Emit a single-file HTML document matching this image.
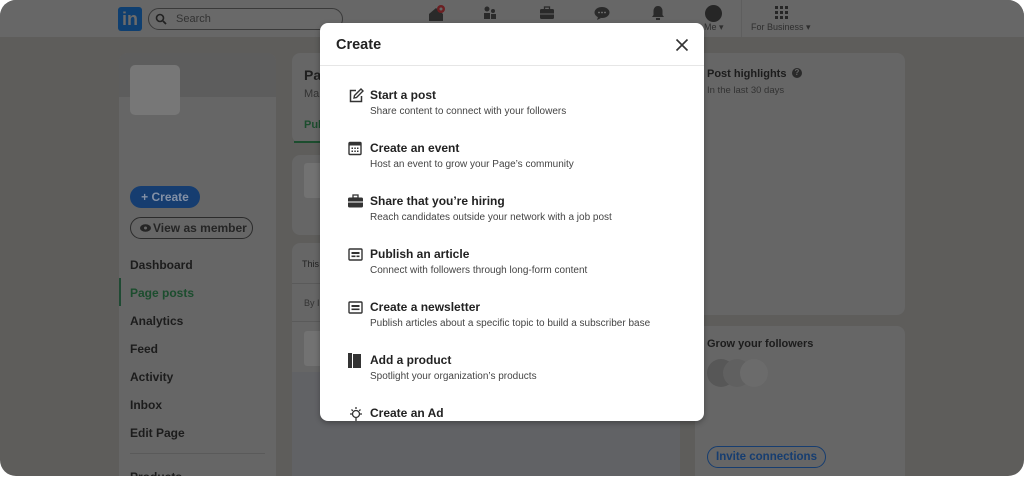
<!DOCTYPE html>
<html><head><meta charset="utf-8"><style>
*{margin:0;padding:0;box-sizing:border-box}
body{width:1024px;height:478px;background:#fff;font-family:"Liberation Sans",Arial,sans-serif;position:relative;overflow:hidden}
.frame{position:absolute;left:0;top:0;width:1024px;height:476px;border-radius:16px;background:#5e5d5b;overflow:hidden}
.a{position:absolute}
.card{position:absolute;background:#666;border-radius:8px}
.t{position:absolute;white-space:nowrap}
.nav{position:absolute;left:0;top:0;width:1024px;height:37px;background:#676767}
.modal{position:absolute;left:320px;top:23px;width:384px;height:398px;background:#fff;border-radius:8px;overflow:hidden;box-shadow:0 2px 6px rgba(0,0,0,.3)}
.it{position:absolute;left:50px}
.it b{display:block;font-size:12px;font-weight:bold;color:#222}
.it span{display:block;font-size:10px;color:#444;margin-top:4px}
.ic{position:absolute;left:28px}
.lm{position:absolute;left:130px;font-size:12px;font-weight:bold;color:#1c1c1c}
</style></head><body>
<div class="frame">
<div class="nav"></div>
<div class="a" style="left:118px;top:7px;width:24px;height:24px;background:#0f3f70;border-radius:3px;color:#777;font-weight:bold;font-size:18px;line-height:25px;text-align:center;color:#6a6a6a">in</div>
<div class="a" style="left:148px;top:8px;width:195px;height:22px;border:1px solid #3a3a3a;border-radius:12px;background:#696969"></div>
<svg class="a" style="left:155px;top:13px" width="12" height="12"><circle cx="5" cy="5" r="3.5" stroke="#222" stroke-width="1.6" fill="none"/><path d="M8 8l3 3" stroke="#222" stroke-width="1.8"/></svg>
<div class="t" style="left:176px;top:13px;font-size:11px;color:#333">Search</div>
<svg class="a" style="left:427px;top:4px" width="22" height="18"><path d="M2 10L9 4l7 6v7H2z" fill="#2a2a2a"/><circle cx="14" cy="5" r="4" fill="#6b1f22"/><circle cx="14" cy="5" r="1.5" fill="#666"/></svg>
<svg class="a" style="left:483px;top:6px" width="14" height="14"><circle cx="4" cy="3" r="2.5" fill="#2a2a2a"/><circle cx="10" cy="5" r="2" fill="#2a2a2a"/><rect x="1" y="7" width="6" height="6" fill="#2a2a2a"/><rect x="8" y="8" width="5" height="5" fill="#2a2a2a"/></svg>
<svg class="a" style="left:539px;top:6px" width="16" height="14"><rect x="1" y="3" width="14" height="10" rx="1.5" fill="#2a2a2a"/><rect x="5.5" y="1" width="5" height="3" fill="none" stroke="#2a2a2a" stroke-width="1.3"/><path d="M1 8h14" stroke="#666" stroke-width="1"/></svg>
<svg class="a" style="left:594px;top:6px" width="16" height="14"><ellipse cx="8" cy="6.5" rx="7.5" ry="5.5" fill="#2a2a2a"/><path d="M4 11l-1 3 4-2z" fill="#2a2a2a"/><circle cx="5" cy="6.5" r=".9" fill="#777"/><circle cx="8" cy="6.5" r=".9" fill="#777"/><circle cx="11" cy="6.5" r=".9" fill="#777"/></svg>
<svg class="a" style="left:650px;top:5px" width="16" height="16"><path d="M8 1c-3 0-4.5 2.5-4.5 5v4L2 12h12l-1.5-2V6C12.5 3.5 11 1 8 1z" fill="#2a2a2a"/><rect x="6" y="13" width="4" height="2" fill="#2a2a2a"/></svg>
<div class="a" style="left:705px;top:5px;width:17px;height:17px;border-radius:50%;background:#262626"></div>
<div class="t" style="left:704px;top:22px;font-size:9px;color:#2e2e2e">Me ▾</div>
<div class="a" style="left:741px;top:0;width:1px;height:37px;background:#5e5e5e"></div>
<svg class="a" style="left:775px;top:6px" width="14" height="14"><g fill="#262626"><rect x="0" y="0" width="3" height="3"/><rect x="5" y="0" width="3" height="3"/><rect x="10" y="0" width="3" height="3"/><rect x="0" y="5" width="3" height="3"/><rect x="5" y="5" width="3" height="3"/><rect x="10" y="5" width="3" height="3"/><rect x="0" y="10" width="3" height="3"/><rect x="5" y="10" width="3" height="3"/><rect x="10" y="10" width="3" height="3"/></g></svg>
<div class="t" style="left:751px;top:22px;font-size:9px;color:#2e2e2e">For Business ▾</div>

<!-- left card -->
<div class="card" style="left:119px;top:53px;width:157px;height:440px;overflow:hidden"><div style="height:44px;background:#5d5d5d"></div></div>
<div class="a" style="left:130px;top:65px;width:50px;height:50px;background:#777;border-radius:5px"></div>
<div class="a" style="left:130px;top:186px;width:70px;height:22px;background:#163d70;border-radius:11px;color:#7a8aa3;font-size:12px;font-weight:bold;line-height:22px;text-align:center;color:#8491a6">+ Create</div>
<div class="a" style="left:130px;top:217px;width:123px;height:22px;border:1px solid #2b2b2b;border-radius:11px;font-size:12px;font-weight:bold;line-height:20px;color:#252525;padding-left:22px">View as member</div>
<svg class="a" style="left:140px;top:224px" width="11" height="8"><ellipse cx="5.5" cy="4" rx="5.5" ry="3.8" fill="#252525"/><circle cx="5.5" cy="4" r="1.5" fill="#666"/></svg>
<div class="lm" style="top:258px">Dashboard</div>
<div class="a" style="left:119px;top:278px;width:2px;height:28px;background:#1f4a33"></div>
<div class="lm" style="top:286px;color:#1c4d2e">Page posts</div>
<div class="lm" style="top:314px">Analytics</div>
<div class="lm" style="top:342px">Feed</div>
<div class="lm" style="top:370px">Activity</div>
<div class="lm" style="top:398px">Inbox</div>
<div class="lm" style="top:426px">Edit Page</div>
<div class="a" style="left:130px;top:453px;width:135px;height:1px;background:#5a5a5a"></div>
<div class="lm" style="top:470px">Products</div>

<!-- middle -->
<div class="card" style="left:292px;top:53px;width:120px;height:90px"></div>
<div class="t" style="left:304px;top:67px;font-size:14px;font-weight:bold;color:#1f1f1f">Pa</div>
<div class="t" style="left:304px;top:88px;font-size:11px;color:#333">Ma</div>
<div class="t" style="left:304px;top:119px;font-size:11px;font-weight:bold;color:#1c4d2e">Pul</div>
<div class="a" style="left:294px;top:141px;width:40px;height:2px;background:#1c4d2e"></div>
<div class="card" style="left:292px;top:155px;width:120px;height:80px"></div>
<div class="a" style="left:304px;top:163px;width:30px;height:35px;background:#727272;border-radius:3px"></div>
<div class="card" style="left:292px;top:243px;width:400px;height:130px;border-radius:8px 8px 0 0"></div>
<div class="t" style="left:302px;top:259px;font-size:9px;color:#222">This</div>
<div class="a" style="left:292px;top:283px;width:120px;height:1px;background:#5a5a5a"></div>
<div class="t" style="left:304px;top:298px;font-size:9px;color:#333">By I</div>
<div class="a" style="left:292px;top:321px;width:120px;height:1px;background:#5a5a5a"></div>
<div class="a" style="left:304px;top:331px;width:30px;height:35px;background:#727272;border-radius:3px"></div>
<div class="a" style="left:292px;top:372px;width:388px;height:110px;background:#616265"></div>

<!-- right -->
<div class="card" style="left:695px;top:53px;width:210px;height:262px"></div>
<div class="t" style="left:707px;top:68px;font-size:11px;font-weight:bold;color:#1c1c1c">Post highlights</div>
<div class="a" style="left:792px;top:68px;width:10px;height:10px;border-radius:50%;background:#2a2a2a;color:#666;font-size:8px;font-weight:bold;text-align:center;line-height:10px">?</div>
<div class="t" style="left:707px;top:85px;font-size:9.5px;color:#333">In the last 30 days</div>
<div class="card" style="left:695px;top:326px;width:210px;height:170px"></div>
<div class="t" style="left:707px;top:338px;font-size:11px;font-weight:bold;color:#1c1c1c">Grow your followers</div>
<div class="a" style="left:707px;top:359px;width:28px;height:28px;border-radius:50%;background:#575757"></div>
<div class="a" style="left:723px;top:359px;width:28px;height:28px;border-radius:50%;background:#606060"></div>
<div class="a" style="left:740px;top:359px;width:28px;height:28px;border-radius:50%;background:#6b6b6b"></div>
<div class="a" style="left:707px;top:446px;width:119px;height:22px;border:1px solid #163d70;border-radius:11px;color:#163d70;font-size:11.5px;font-weight:bold;text-align:center;line-height:20px">Invite connections</div>

<!-- modal -->
<div class="modal">
<div class="t" style="left:16px;top:14px;font-size:14.5px;font-weight:bold;color:#222">Create</div>
<svg class="a" style="left:355px;top:15px" width="14" height="14"><path d="M1.5 1.5l11 11M12.5 1.5l-11 11" stroke="#333" stroke-width="1.6"/></svg>
<div class="a" style="left:0;top:42px;width:384px;height:1px;background:#e6e6e6"></div>

<svg class="ic" style="top:65px" width="16" height="16"><path d="M8 2.5H2.5v11h11V8" stroke="#333" stroke-width="1.5" fill="none"/><path d="M6 10l.5-2.5L13 1l2 2-6.5 6.5z" stroke="#333" stroke-width="1.4" fill="none"/></svg>
<div class="it" style="top:65px"><b>Start a post</b><span>Share content to connect with your followers</span></div>

<svg class="ic" style="top:118px" width="14" height="15"><rect x="1" y="1.5" width="12" height="12" rx="1" fill="none" stroke="#333" stroke-width="1.4"/><rect x="1" y="1.5" width="12" height="3" fill="#333"/><g fill="#333"><rect x="3.5" y="6.5" width="1.5" height="1.5"/><rect x="6.3" y="6.5" width="1.5" height="1.5"/><rect x="9" y="6.5" width="1.5" height="1.5"/><rect x="3.5" y="9.5" width="1.5" height="1.5"/><rect x="6.3" y="9.5" width="1.5" height="1.5"/><rect x="9" y="9.5" width="1.5" height="1.5"/></g></svg>
<div class="it" style="top:118px"><b>Create an event</b><span>Host an event to grow your Page’s community</span></div>

<svg class="ic" style="top:171px" width="15" height="14"><rect x="0" y="3.5" width="15" height="10" rx="1.5" fill="#333"/><rect x="5" y="1" width="5" height="3" fill="none" stroke="#333" stroke-width="1.3"/><path d="M0 8h15" stroke="#fff" stroke-width="1"/></svg>
<div class="it" style="top:171px"><b>Share that you’re hiring</b><span>Reach candidates outside your network with a job post</span></div>

<svg class="ic" style="top:225px" width="15" height="13"><rect x="1" y="1" width="13" height="11" rx="1" fill="none" stroke="#333" stroke-width="1.4"/><rect x="3.5" y="4" width="8" height="2" fill="#333"/><rect x="3.5" y="7.5" width="4" height="1.6" fill="#333"/><rect x="8.5" y="7.5" width="3" height="1.6" fill="#333"/></svg>
<div class="it" style="top:224px"><b>Publish an article</b><span>Connect with followers through long-form content</span></div>

<svg class="ic" style="top:278px" width="15" height="13"><rect x="1" y="1" width="13" height="11" rx="1" fill="none" stroke="#333" stroke-width="1.4"/><rect x="3.5" y="4" width="8" height="2" fill="#333"/><rect x="3.5" y="7.5" width="8" height="1.6" fill="#333"/></svg>
<div class="it" style="top:277px"><b>Create a newsletter</b><span>Publish articles about a specific topic to build a subscriber base</span></div>

<svg class="ic" style="top:330px" width="13" height="15"><rect x="0" y="0" width="4" height="15" fill="#333"/><rect x="5" y="1" width="8" height="14" fill="#333"/></svg>
<div class="it" style="top:330px"><b>Add a product</b><span>Spotlight your organization’s products</span></div>

<svg class="ic" style="top:383px" width="16" height="16"><circle cx="8" cy="8" r="3.5" fill="none" stroke="#333" stroke-width="1.3"/><path d="M8 1v2M2 8h2M12 8h2M3.5 3.5l1.3 1.3M12.5 3.5l-1.3 1.3M8 12v3" stroke="#333" stroke-width="1.3"/></svg>
<div class="it" style="top:383px"><b>Create an Ad</b></div>
</div>
</div>
</body></html>
